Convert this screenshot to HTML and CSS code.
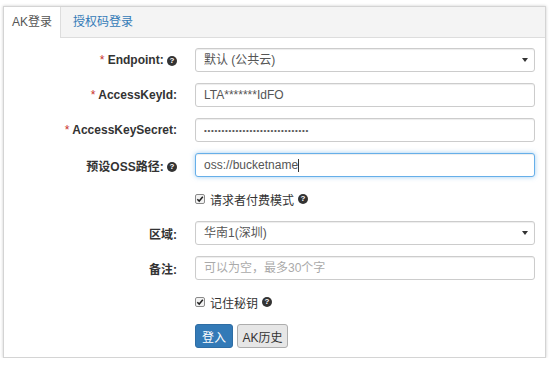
FILE: index.html
```html
<!DOCTYPE html>
<html lang="zh-CN">
<head>
  <meta charset="UTF-8">
  <title>AK登录</title>
  <link rel="stylesheet" href="styles.css">
</head>
<body>

<div class="login-panel">
  <div class="tabs">
    <div class="tab active">AK登录</div>
    <div class="tab">授权码登录</div>
  </div>

  <form class="login-form">
    <div class="form-row">
      <label class="form-label"><span class="req">*</span> Endpoint: <span class="help">?</span></label>
      <div class="select-wrap">
        <select class="form-control">
          <option>默认 (公共云)</option>
        </select>
      </div>
    </div>

    <div class="form-row">
      <label class="form-label"><span class="req">*</span> AccessKeyId:</label>
      <input class="form-control" type="text" value="LTA*******IdFO">
    </div>

    <div class="form-row">
      <label class="form-label"><span class="req">*</span> AccessKeySecret:</label>
      <input class="form-control secret" type="password" value="abcdefghijklmnopqrstuvwxyz0123">
    </div>

    <div class="form-row">
      <label class="form-label">预设OSS路径: <span class="help">?</span></label>
      <div class="form-control focused">oss://bucketname<span class="caret"></span></div>
    </div>

    <div class="form-row check-row">
      <div class="form-label"></div>
      <label class="check">
        <svg class="checkbox" width="10" height="10" viewBox="0 0 10 10">
          <rect x="0.5" y="0.5" width="9" height="9" rx="1.5" fill="#f2f2f2" stroke="#8a8a8a"/>
          <path d="M2.3 5.2 L4.2 7.1 L7.8 2.8" fill="none" stroke="#222" stroke-width="1.5"/>
        </svg>
        请求者付费模式 <span class="help">?</span>
      </label>
    </div>

    <div class="form-row">
      <label class="form-label">区域:</label>
      <div class="select-wrap">
        <select class="form-control">
          <option>华南1(深圳)</option>
        </select>
      </div>
    </div>

    <div class="form-row">
      <label class="form-label">备注:</label>
      <input class="form-control" type="text" placeholder="可以为空，最多30个字">
    </div>

    <div class="form-row check-row">
      <div class="form-label"></div>
      <label class="check">
        <svg class="checkbox" width="10" height="10" viewBox="0 0 10 10">
          <rect x="0.5" y="0.5" width="9" height="9" rx="1.5" fill="#f2f2f2" stroke="#8a8a8a"/>
          <path d="M2.3 5.2 L4.2 7.1 L7.8 2.8" fill="none" stroke="#222" stroke-width="1.5"/>
        </svg>
        记住秘钥 <span class="help">?</span>
      </label>
    </div>

    <div class="form-row buttons-row">
      <div class="form-label"></div>
      <div class="buttons">
        <button type="button" class="btn btn-primary">登入</button>
        <button type="button" class="btn btn-default">AK历史</button>
      </div>
    </div>
  </form>
</div>

</body>
</html>
```

FILE: styles.css
```css
body {
  margin: 0;
  background: #fff;
  font-family: "Liberation Sans", "Noto Sans CJK SC", sans-serif;
  font-size: 12px;
  color: #333;
}

.login-panel {
  margin: 6px 4px 0 3px;
  height: 352px;
  border: 1px solid #d4d4d4;
  box-shadow: 0 0 3px rgba(0,0,0,0.2);
  background: #fff;
  box-sizing: border-box;
}

/* Tabs */
.tabs {
  display: flex;
  height: 30px;
  background: #f4f4f4;
  border-bottom: 1px solid #ddd;
}

.tab {
  padding: 0 12px;
  line-height: 30px;
  color: #337ab7;
}

.tab.active {
  width: 56px;
  padding: 0;
  text-align: center;
  color: #555;
  background: #fff;
  border-right: 1px solid #ddd;
  margin-bottom: -1px;
  height: 31px;
}

/* Form */
.login-form {
  display: flex;
  flex-direction: column;
  gap: 11px;
  padding: 10px 10px 0 0;
}

.form-row {
  display: flex;
  align-items: center;
}

.form-label {
  width: 173px;
  flex-shrink: 0;
  margin-right: 18px;
  text-align: right;
  font-weight: bold;
  font-size: 12px;
}

.req {
  color: #c9302c;
  font-weight: normal;
}

.help {
  display: inline-block;
  width: 10px;
  height: 10px;
  border-radius: 50%;
  background: #333;
  color: #fff;
  font-size: 8px;
  font-weight: bold;
  line-height: 10px;
  text-align: center;
  vertical-align: middle;
  font-family: "Liberation Sans", sans-serif;
}

.form-control {
  flex: 1;
  width: 100%;
  height: 24px;
  box-sizing: border-box;
  padding: 0 8px;
  border: 1px solid #ccc;
  border-radius: 3px;
  box-shadow: inset 0 1px 1px rgba(0,0,0,0.075);
  font-family: "Liberation Sans", "Noto Sans CJK SC", sans-serif;
  font-size: 12px;
  color: #555;
  background: #fff;
  outline: none;
}

.form-control::placeholder {
  color: #aaa;
}

.secret {
  font-size: 8px;
  letter-spacing: 0.7px;
}

.focused {
  display: flex;
  align-items: center;
  border-color: #66afe9;
  box-shadow: inset 0 1px 1px rgba(0,0,0,0.075), 0 0 5px rgba(102,175,233,0.6);
}

.caret {
  display: inline-block;
  width: 1px;
  height: 13px;
  background: #333;
}

.select-wrap {
  flex: 1;
  position: relative;
  display: flex;
}

.select-wrap select {
  appearance: none;
  -webkit-appearance: none;
}

.select-wrap::after {
  content: "";
  position: absolute;
  right: 7px;
  top: 10px;
  border-left: 3px solid transparent;
  border-right: 3px solid transparent;
  border-top: 4px solid #333;
}

.check-row {
  height: 22px;
}

.check {
  display: flex;
  align-items: center;
  gap: 4px;
  color: #333;
}

.checkbox {
  margin-right: 1px;
}

.buttons {
  display: flex;
  gap: 4px;
}

.btn {
  height: 24px;
  padding: 0;
  border-radius: 3px;
  font-family: "Liberation Sans", "Noto Sans CJK SC", sans-serif;
  font-size: 12px;
  cursor: pointer;
}

.btn-primary {
  width: 38px;
  color: #fff;
  background: #337ab7;
  border: 1px solid #2e6da4;
}

.btn-default {
  width: 51px;
  color: #333;
  background: #e6e6e6;
  border: 1px solid #adadad;
}
```
